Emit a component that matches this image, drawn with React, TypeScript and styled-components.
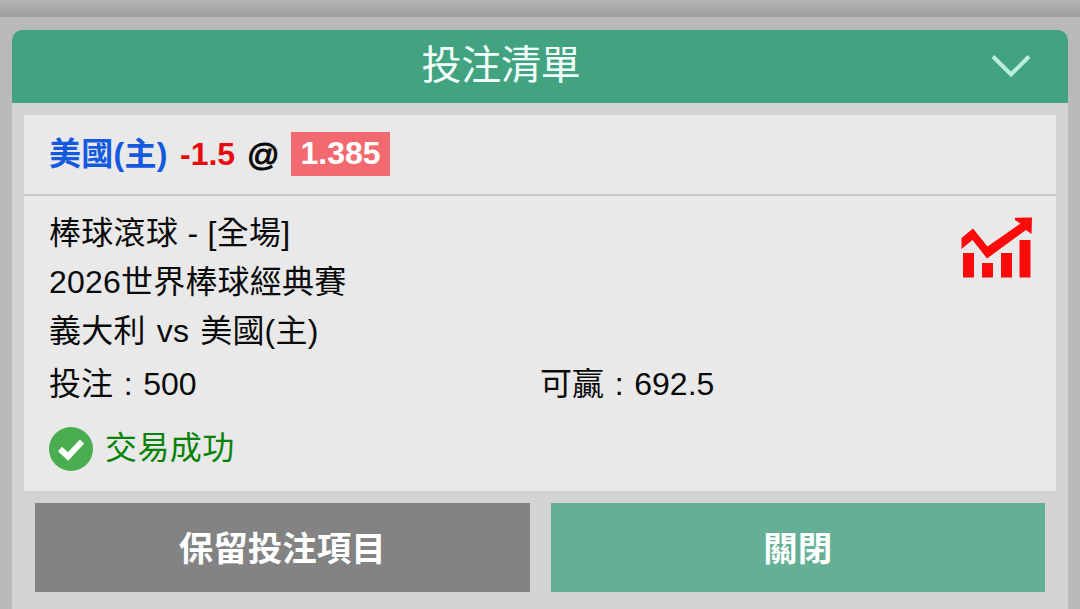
import styled, { createGlobalStyle } from "styled-components";

const GlobalStyle = createGlobalStyle`
  * {
    box-sizing: border-box;
  }
  body {
    margin: 0;
    background: #b9b9b9;
    color: #0a0a0a;
    font-family: "Liberation Sans", "Noto Sans CJK TC", sans-serif;
    overflow: hidden;
  }
`;

const Screen = styled.div`
  display: flex;
  flex-direction: column;
  width: 1080px;
  height: 609px;
  overflow: hidden;
`;

const TopShade = styled.div`
  flex: none;
  height: 17px;
  background: linear-gradient(#b6b6b6, #9c9c9c);
`;

const Slip = styled.section`
  display: flex;
  flex-direction: column;
  flex: 1;
  margin: 12.5px 12px 0;
  border-radius: 10px 10px 0 0;
  background: #d3d3d3;
  overflow: hidden;
`;

const SlipHeader = styled.header`
  display: flex;
  align-items: center;
  flex: none;
  height: 73.5px;
  padding-right: 36px;
  background: #41a380;
  color: #f3fffb;
`;

const Title = styled.h1`
  flex: 1;
  margin: 0;
  padding-bottom: 3px;
  font-size: 40px;
  font-weight: 400;
  line-height: 60px;
  letter-spacing: -0.3px;
  text-align: center;
`;

const Card = styled.div`
  flex: none;
  height: 376px;
  margin: 12px 12px 0;
  background: #e9e9e9;
`;

const Selection = styled.div`
  display: flex;
  align-items: center;
  height: 81px;
  padding: 0 0 1px 25px;
  border-bottom: 2px solid #c8c8c8;
  font-size: 32px;
  font-weight: 700;
  line-height: 43px;
`;

const Team = styled.span`
  width: 131px;
  color: #1459e0;
  letter-spacing: 0.3px;
`;

const Handicap = styled.span`
  width: 67px;
  color: #e80a10;
`;

const At = styled.span`
  width: 44px;
  padding-top: 3px;
  font-weight: 400;
  -webkit-text-stroke: 1px #0a0a0a;
`;

const Odds = styled.span`
  width: 99px;
  height: 44px;
  background: #f26a6f;
  color: #fff;
  text-align: center;
`;

const Details = styled.div`
  display: flex;
  justify-content: space-between;
  padding: 13px 23px 0 25px;
`;

const MatchInfo = styled.div`
  font-size: 32px;
  line-height: 49px;
`;

const Line = styled.div<{ $spacing?: number; $wordSpacing?: number }>`
  white-space: pre;
  letter-spacing: ${({ $spacing = 0 }) => $spacing}px;
  word-spacing: ${({ $wordSpacing = 0 }) => $wordSpacing}px;
`;

const TrendIconWrap = styled.div`
  padding-top: 8px;
`;

const Stakes = styled.div`
  display: grid;
  grid-template-columns: 491px 1fr;
  padding: 4px 0 0 25px;
  font-size: 32px;
  line-height: 48px;
`;

const Status = styled.div`
  display: flex;
  align-items: center;
  gap: 12px;
  padding: 16px 0 0 25px;
  color: #078207;
  font-size: 32px;
  line-height: 48px;
`;

const StatusText = styled.span`
  padding-bottom: 1px;
  letter-spacing: 0.4px;
`;

const Actions = styled.div`
  display: grid;
  grid-template-columns: 1fr 1fr;
  gap: 21px;
  padding: 12px 23px 0;
`;

const ActionButton = styled.button<{ $primary?: boolean }>`
  height: 89px;
  padding: 0 0 4px;
  border: 0;
  background: ${({ $primary }) => ($primary ? "#63b096" : "#838383")};
  color: #fff;
  font-family: inherit;
  font-size: 34.5px;
  font-weight: 700;
`;

const ChevronIcon = () => (
  <svg width="42" height="26" viewBox="0 0 42 26" fill="none">
    <path d="M3 3.500L21 21.500L39 3.500" stroke="#bdeedd" strokeWidth="4" />
  </svg>
);

const TrendIcon = () => (
  <svg width="72" height="62" viewBox="0 0 72 62" fill="#fb0a0c">
    <path d="M0.500 21L12 11.500L26.500 29.500L59.500 6.500L54 3V0.800L71 0.500L70.500 17L65 13L26 41.500L11.500 23L0.500 32Z" />
    <path d="M2 36H13V60.500H2ZM21 46H32V60.500H21ZM40 36H51V60.500H40ZM58.500 23H69.500V60.500H58.500Z" />
  </svg>
);

const SuccessIcon = () => (
  <svg width="44" height="46" viewBox="0 0 44 46">
    <circle cx="22" cy="23" r="22" fill="#4aad50" />
    <path d="M11 23L19 30.500L33 15.500" fill="none" stroke="#fff" strokeWidth="6" />
  </svg>
);

export default function App() {
  return (
    <>
      <GlobalStyle />
      <Screen>
        <TopShade />
        <Slip>
          <SlipHeader>
            <Title>投注清單</Title>
            <ChevronIcon />
          </SlipHeader>
          <Card>
            <Selection>
              <Team>美國(主)</Team>
              <Handicap>-1.5</Handicap>
              <At>@</At>
              <Odds>1.385</Odds>
            </Selection>
            <Details>
              <MatchInfo>
                <Line $spacing={0.3}>棒球滾球 - [全場]</Line>
                <Line $spacing={0.2}>2026世界棒球經典賽</Line>
                <Line $spacing={0.2} $wordSpacing={2}>義大利 vs 美國(主)</Line>
              </MatchInfo>
              <TrendIconWrap>
                <TrendIcon />
              </TrendIconWrap>
            </Details>
            <Stakes>
              <Line $wordSpacing={1.8}>投注 : 500</Line>
              <Line $wordSpacing={1.8}>可贏 : 692.5</Line>
            </Stakes>
            <Status>
              <SuccessIcon />
              <StatusText>交易成功</StatusText>
            </Status>
          </Card>
          <Actions>
            <ActionButton>保留投注項目</ActionButton>
            <ActionButton $primary>關閉</ActionButton>
          </Actions>
        </Slip>
      </Screen>
    </>
  );
}
